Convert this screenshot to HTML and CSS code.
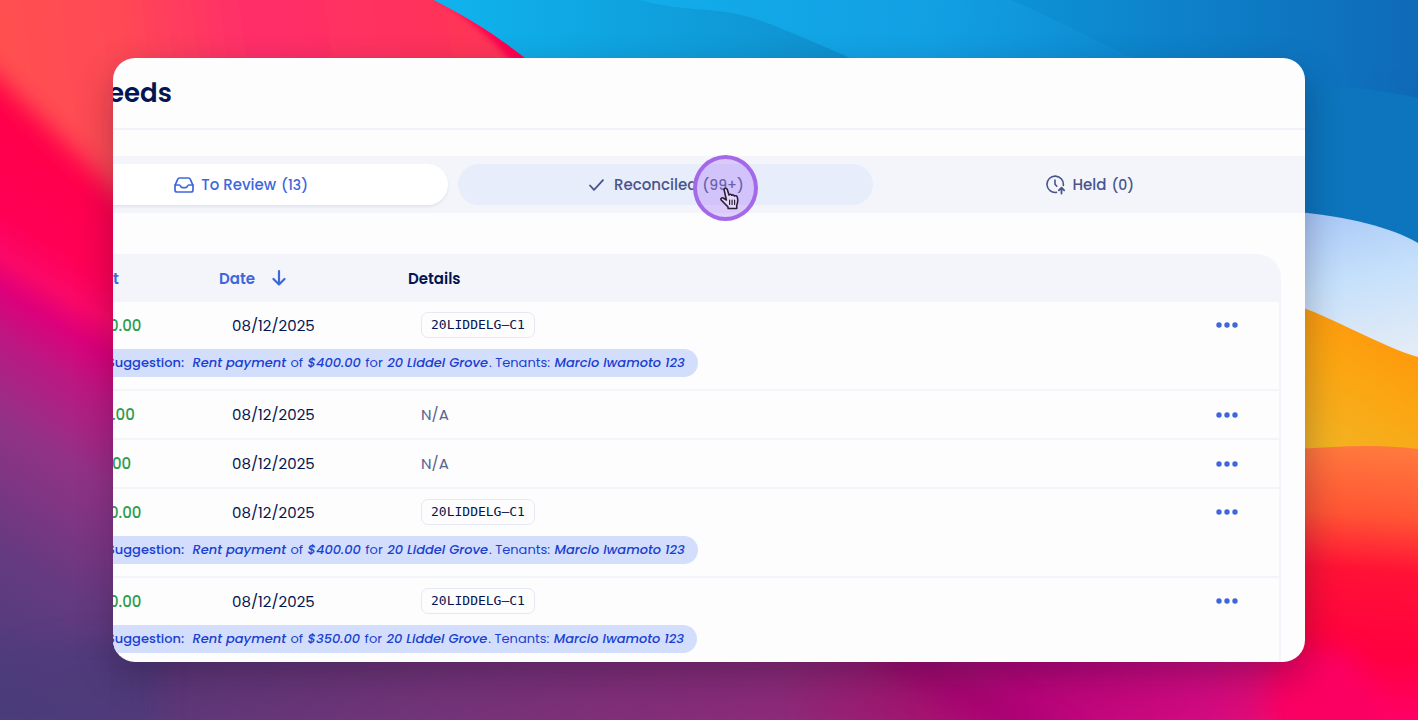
FILE: index.html
```html
<!DOCTYPE html>
<html lang="en">
<head>
    <meta charset="UTF-8">
    <meta name="viewport" content="width=device-width, initial-scale=1.0">
    <title>Feeds</title>
    <link rel="stylesheet" href="styles.css">
</head>
<body>
    <svg class="wallpaper" viewBox="0 0 1418 720" preserveAspectRatio="none" aria-hidden="true">
        <defs>
            <linearGradient id="blue" gradientUnits="userSpaceOnUse" x1="440" y1="0" x2="1418" y2="120">
                <stop offset="0" stop-color="#12b5f0"/>
                <stop offset="0.5" stop-color="#12a0e3"/>
                <stop offset="0.8" stop-color="#0c7fc9"/>
                <stop offset="1" stop-color="#0f68b6"/>
            </linearGradient>
            <linearGradient id="wave" x1="0" y1="0" x2="1" y2="0">
                <stop offset="0" stop-color="#0fb4ee"/>
                <stop offset="1" stop-color="#0f8ccb"/>
            </linearGradient>
            <linearGradient id="deep" x1="0" y1="0" x2="1" y2="0">
                <stop offset="0" stop-color="#0c92d6"/>
                <stop offset="1" stop-color="#0f6ab8"/>
            </linearGradient>
            <linearGradient id="sky" x1="0" y1="0" x2="0.2" y2="1">
                <stop offset="0" stop-color="#a6c5f6"/>
                <stop offset="0.5" stop-color="#c5e0fb"/>
                <stop offset="1" stop-color="#e2ebf6"/>
            </linearGradient>
            <linearGradient id="orange" x1="0.8" y1="0" x2="0.3" y2="1">
                <stop offset="0" stop-color="#ff920a"/>
                <stop offset="0.5" stop-color="#fba612"/>
                <stop offset="1" stop-color="#f2b424"/>
            </linearGradient>
            <linearGradient id="fire" gradientUnits="userSpaceOnUse" x1="1360" y1="445" x2="1340" y2="720">
                <stop offset="0" stop-color="#ff7a3e"/>
                <stop offset="0.25" stop-color="#ff5534"/>
                <stop offset="0.45" stop-color="#ff1236"/>
                <stop offset="0.75" stop-color="#ff0040"/>
                <stop offset="1" stop-color="#ff006a"/>
            </linearGradient>
            <linearGradient id="coral" gradientUnits="userSpaceOnUse" x1="0" y1="60" x2="460" y2="0">
                <stop offset="0" stop-color="#ff5050"/>
                <stop offset="0.25" stop-color="#ff4a54"/>
                <stop offset="0.55" stop-color="#ff2d6a"/>
                <stop offset="1" stop-color="#ff3458"/>
            </linearGradient>
            <linearGradient id="floor" gradientUnits="userSpaceOnUse" x1="0" y1="0" x2="1418" y2="0">
                <stop offset="0" stop-color="#463e7a"/>
                <stop offset="0.1" stop-color="#5b3878"/>
                <stop offset="0.3" stop-color="#723478"/>
                <stop offset="0.55" stop-color="#8c2a78"/>
                <stop offset="0.65" stop-color="#a3146f"/>
                <stop offset="0.72" stop-color="#b8047a"/>
                <stop offset="0.85" stop-color="#d20a80"/>
                <stop offset="0.93" stop-color="#f20a6c"/>
            </linearGradient>
            <linearGradient id="side" gradientUnits="userSpaceOnUse" x1="60" y1="60" x2="-240" y2="560">
                <stop offset="0" stop-color="#ff0040"/>
                <stop offset="0.28" stop-color="#ff0056"/>
                <stop offset="0.34" stop-color="#fa0868"/>
                <stop offset="0.39" stop-color="#dd007a"/>
                <stop offset="0.46" stop-color="#bc1882"/>
                <stop offset="0.58" stop-color="#923286"/>
                <stop offset="0.77" stop-color="#663a80"/>
                <stop offset="1" stop-color="#463e7a"/>
            </linearGradient>
            <filter id="soft" filterUnits="userSpaceOnUse" x="-60" y="-60" width="1540" height="840">
                <feGaussianBlur stdDeviation="12"/>
            </filter>
            <filter id="slight">
                <feGaussianBlur stdDeviation="3"/>
            </filter>
        </defs>
        <rect width="600" height="720" fill="url(#side)"/>
        <path d="M-40 -60H560V620L-40 42Z" fill="url(#coral)" filter="url(#soft)"/>
        <path d="M426 -10C462 14 488 34 512 62H560V-10Z" fill="#ff0050" filter="url(#slight)"/>
        <path d="M434 0C470 18 500 38 528 60V250H1418V0Z" fill="url(#blue)"/>
        <path d="M640 0C690 14 720 4 770 24C820 44 850 58 900 80H550L528 60C500 38 470 18 434 0Z" fill="url(#wave)"/>
        <path d="M1010 0C1060 20 1090 40 1160 70H1418V0Z" fill="url(#deep)"/>
        <path d="M1290 86C1340 84 1380 90 1418 98V250H1290Z" fill="#0c75bd"/>
        <path d="M1290 211C1350 217 1390 227 1418 243V370H1290Z" fill="url(#sky)"/>
        <path d="M1290 303C1335 318 1380 346 1418 357V460H1290Z" fill="url(#orange)"/>
        <path d="M1290 449C1330 448 1370 443 1418 449V720H1290Z" fill="url(#fire)"/>
        <path d="M110 650H1300V720H110Z" fill="url(#floor)"/>
        <path d="M-40 680L60 640H160V740H-40Z" fill="#4e3b7a" opacity="0.7" filter="url(#soft)"/>
        <path d="M860 650L1000 740H1080L920 650Z" fill="#a60070" opacity="0.6" filter="url(#soft)"/>
        <path d="M1270 650H1350L1400 760H1270Z" fill="#fb0462" filter="url(#soft)"/>
    </svg>

    <main class="window">
        <header class="page-header">
            <h1>eeds</h1>
        </header>

        <nav class="tabs">
            <button type="button" class="tab active">
                <svg width="20" height="16" viewBox="0 0 20 16" fill="none" stroke="currentColor" stroke-width="1.7" stroke-linejoin="round" stroke-linecap="round">
                    <path d="M1 8.6L3.5 2.6C3.9 1.5 4.6 1 5.6 1H14.4C15.4 1 16.1 1.5 16.5 2.6L19 8.6V13C19 14.2 18.2 15 17 15H3C1.8 15 1 14.2 1 13Z"/>
                    <path d="M1 8H5.3C6.6 8 6.6 10.6 8.2 10.6H11.8C13.4 10.6 13.4 8 14.7 8H19"/>
                </svg>
                <span class="label">To Review <small>(13)</small></span>
            </button>
            <button type="button" class="tab hovered">
                <svg width="20" height="14" viewBox="0 0 20 14" fill="none" stroke="currentColor" stroke-width="1.8" stroke-linejoin="round" stroke-linecap="round">
                    <path d="M3 7.5L7 11.8L16 2.2"/>
                </svg>
                <span class="label">Reconciled <small>(99+)</small></span>
                <span class="pointer">
                    <svg width="22" height="24" viewBox="0 0 22 24" fill="#e4d6f8" stroke="#2c2038" stroke-width="1.6" stroke-linejoin="round" stroke-linecap="round">
                        <path d="M5.2 3.2C4.6 1.2 7.4 .4 8.2 2.3L10 8C10.6 6.9 12.3 7.1 12.7 8.3C13.6 7.5 15 7.9 15.4 9C16.4 8.4 18 8.8 18.3 10.2C19.3 13.4 18.6 16 17.7 18.2L17.8 21.5H9.2L8.8 19.6C6.6 18 4.8 15.2 2.5 13.4C1 12 2.7 10 4.6 11.2L7.4 13Z"/>
                        <path d="M10.6 13V17.5M13.1 13V17.5M15.6 13V17.5" stroke-width="1.2"/>
                    </svg>
                </span>
            </button>
            <button type="button" class="tab">
                <svg width="20" height="20" viewBox="0 0 20 20" fill="none" stroke="currentColor" stroke-width="1.6" stroke-linejoin="round" stroke-linecap="round">
                    <path d="M17.3 10.4A8.2 8.2 0 1 0 10.4 17.4"/>
                    <path d="M9 5V9.2L10.8 11.2"/>
                    <path d="M15.5 18.6V13M12.8 15.4L15.5 12.7L18.2 15.4" stroke-width="1.8"/>
                </svg>
                <span class="label">Held <small>(0)</small></span>
            </button>
        </nav>

        <div class="table-box">
            <table>
                <thead>
                    <tr>
                        <th class="col-amount sortable">t</th>
                        <th class="col-date sortable">
                            <button type="button" class="sort">
                                Date
                                <svg width="14" height="16" viewBox="0 0 14 16" fill="none" stroke="currentColor" stroke-width="2.2" stroke-linejoin="round" stroke-linecap="round">
                                    <path d="M7 1.2V14.5M1.5 9L7 14.5L12.5 9"/>
                                </svg>
                            </button>
                        </th>
                        <th>Details</th>
                        <th class="col-menu"></th>
                    </tr>
                </thead>
                <tbody>
                    <tr class="has-suggestion">
                        <td class="amount">0.00</td>
                        <td>08/12/2025</td>
                        <td><span class="ref">20LIDDELG–C1</span></td>
                        <td class="menu">
                            <button type="button" aria-label="More">
                                <svg width="22" height="6" viewBox="0 0 22 6" fill="currentColor"><circle cx="3" cy="3" r="2.7"/><circle cx="11" cy="3" r="2.7"/><circle cx="19" cy="3" r="2.7"/></svg>
                            </button>
                        </td>
                    </tr>
                    <tr class="suggestion-row">
                        <td colspan="4">
                            <p class="suggestion"><b>Suggestion:</b> <em>Rent payment</em> of <em>$400.00</em> for <em>20 Liddel Grove</em>. Tenants: <em>Marcio Iwamoto 123</em></p>
                        </td>
                    </tr>
                    <tr>
                        <td class="amount short">.00</td>
                        <td>08/12/2025</td>
                        <td class="empty">N/A</td>
                        <td class="menu">
                            <button type="button" aria-label="More">
                                <svg width="22" height="6" viewBox="0 0 22 6" fill="currentColor"><circle cx="3" cy="3" r="2.7"/><circle cx="11" cy="3" r="2.7"/><circle cx="19" cy="3" r="2.7"/></svg>
                            </button>
                        </td>
                    </tr>
                    <tr>
                        <td class="amount short">00</td>
                        <td>08/12/2025</td>
                        <td class="empty">N/A</td>
                        <td class="menu">
                            <button type="button" aria-label="More">
                                <svg width="22" height="6" viewBox="0 0 22 6" fill="currentColor"><circle cx="3" cy="3" r="2.7"/><circle cx="11" cy="3" r="2.7"/><circle cx="19" cy="3" r="2.7"/></svg>
                            </button>
                        </td>
                    </tr>
                    <tr class="has-suggestion">
                        <td class="amount">0.00</td>
                        <td>08/12/2025</td>
                        <td><span class="ref">20LIDDELG–C1</span></td>
                        <td class="menu">
                            <button type="button" aria-label="More">
                                <svg width="22" height="6" viewBox="0 0 22 6" fill="currentColor"><circle cx="3" cy="3" r="2.7"/><circle cx="11" cy="3" r="2.7"/><circle cx="19" cy="3" r="2.7"/></svg>
                            </button>
                        </td>
                    </tr>
                    <tr class="suggestion-row">
                        <td colspan="4">
                            <p class="suggestion"><b>Suggestion:</b> <em>Rent payment</em> of <em>$400.00</em> for <em>20 Liddel Grove</em>. Tenants: <em>Marcio Iwamoto 123</em></p>
                        </td>
                    </tr>
                    <tr class="has-suggestion">
                        <td class="amount">0.00</td>
                        <td>08/12/2025</td>
                        <td><span class="ref">20LIDDELG–C1</span></td>
                        <td class="menu">
                            <button type="button" aria-label="More">
                                <svg width="22" height="6" viewBox="0 0 22 6" fill="currentColor"><circle cx="3" cy="3" r="2.7"/><circle cx="11" cy="3" r="2.7"/><circle cx="19" cy="3" r="2.7"/></svg>
                            </button>
                        </td>
                    </tr>
                    <tr class="suggestion-row">
                        <td colspan="4">
                            <p class="suggestion"><b>Suggestion:</b> <em>Rent payment</em> of <em>$350.00</em> for <em>20 Liddel Grove</em>. Tenants: <em>Marcio Iwamoto 123</em></p>
                        </td>
                    </tr>
                </tbody>
            </table>
        </div>
    </main>
</body>
</html>
```

FILE: styles.css
```css
* {
    margin: 0;
    padding: 0;
    box-sizing: border-box;
}

body {
    font-family: Poppins, Inter, sans-serif;
    font-size: 15px;
    color: #04154f;
    height: 100vh;
    padding: 58px 113px;
    display: flex;
    overflow: hidden;
}

button {
    font: inherit;
    color: inherit;
    border: none;
    background: none;
    cursor: pointer;
}

.wallpaper {
    position: absolute;
    top: 0;
    left: 0;
    width: 100%;
    height: 100%;
    z-index: -1;
}

.window {
    flex: 1;
    min-width: 0;
    background: #fdfdfe;
    border-radius: 22px;
    overflow: hidden;
    box-shadow: 0 14px 36px rgba(20, 10, 40, 0.3);
}

.page-header {
    height: 72px;
    display: flex;
    align-items: center;
    border-bottom: 2px solid #f1f2fa;
}

.page-header h1 {
    margin-left: -5px;
    font-size: 26px;
    font-weight: 600;
}

/* the bar starts left of the window edge */
.tabs {
    margin: 26px 0 0 -87px;
    padding: 8px;
    display: grid;
    grid-template-columns: repeat(3, 1fr);
    gap: 10px;
    background: #f4f5fb;
}

.tab {
    position: relative;
    height: 41px;
    border-radius: 21px;
    display: flex;
    align-items: center;
    justify-content: center;
    gap: 7px;
    font-weight: 500;
    color: #48558c;
}

.tab.active {
    background: #fff;
    color: #3f67dc;
    box-shadow: 0 2px 3px rgba(30, 40, 90, 0.08);
}

.tab.hovered {
    background: #e8edfc;
}

.tab small {
    font-size: 14px;
    margin-left: 1px;
}

.pointer {
    position: absolute;
    left: calc(50% + 28px);
    top: -9px;
    width: 65px;
    height: 66px;
    border: 4px solid #a369e8;
    border-radius: 50%;
    background: rgba(170, 120, 245, 0.35);
}

.pointer svg {
    position: absolute;
    left: 22px;
    top: 28px;
}

.table-box {
    margin: 41px 24px 0 -6px;
    border-right: 2px solid #f4f5fb;
    border-top-right-radius: 24px;
    overflow: hidden;
}

table {
    width: 100%;
    table-layout: fixed;
    border-collapse: separate;
    border-spacing: 0;
    text-align: left;
}

th {
    height: 48px;
    padding-left: 13px;
    background: #f4f5fb;
    font-weight: 600;
}

td {
    height: 49px;
    padding-left: 26px;
    border-bottom: 2px solid #f4f5fb;
}

.col-amount {
    width: 99px;
    padding-left: 6px;
}

.col-date {
    width: 189px;
}

.col-menu {
    width: 77px;
}

.sortable {
    color: #3f67dc;
}

.sort {
    display: flex;
    align-items: center;
    gap: 17px;
}

.amount {
    padding-left: 2px;
    font-weight: 500;
    color: #2c9c4b;
}

.amount.short {
    padding-left: 5px;
}

.empty {
    color: #5a648f;
}

.menu {
    padding-left: 14px;
}

.menu button {
    display: flex;
    color: #3f67dc;
}

.ref {
    display: block;
    width: fit-content;
    padding: 0 9px;
    border: 1px solid #e6e8f6;
    border-radius: 7px;
    font-family: "DejaVu Sans Mono", monospace;
    font-size: 13px;
    line-height: 24px;
    color: #04154f;
}

.has-suggestion td {
    height: 46px;
    border-bottom: none;
}

.suggestion-row td {
    height: 43px;
    padding: 1px 0 12px;
}

.suggestion {
    width: fit-content;
    padding-right: 12px;
    border-radius: 0 14px 14px 0;
    background: #d3defd;
    color: #1a40d0;
    font-size: 13px;
    line-height: 28px;
    white-space: nowrap;
}

.suggestion b,
.suggestion em {
    font-weight: 500;
}

.suggestion b {
    margin-right: 4px;
}

.suggestion em {
    margin: 0 1px;
}
```
